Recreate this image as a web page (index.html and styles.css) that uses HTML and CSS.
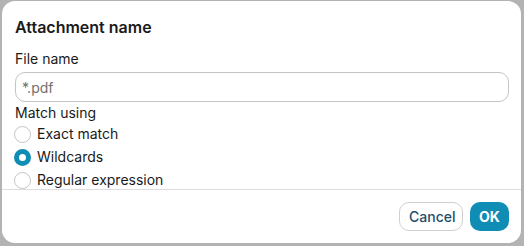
FILE: index.html
```html
<!DOCTYPE html>
<html>
<head>
<meta charset="utf-8">
<link rel="stylesheet" href="styles.css">
</head>
<body>
<div class="dialog">
  <div class="body">
    <h1 class="title">Attachment name</h1>
    <label class="label" for="fn">File name</label>
    <input id="fn" class="input" type="text" placeholder="*.pdf">
    <div class="label match">Match using</div>
    <div class="radios">
      <label class="radio"><span class="dot"></span>Exact match</label>
      <label class="radio"><span class="dot on"></span>Wildcards</label>
      <label class="radio"><span class="dot"></span>Regular expression</label>
    </div>
  </div>
  <div class="footer">
    <button class="btn cancel">Cancel</button>
    <button class="btn ok">OK</button>
  </div>
</div>
</body>
</html>
```
FILE: styles.css
```css
html, body {
  margin: 0;
  padding: 0;
  background: #b3b3b3;
  width: 524px;
  height: 246px;
  overflow: hidden;
}
body {
  padding: 1px 2px 0 2px;
  box-sizing: border-box;
  font-family: Inter, "Noto Sans", sans-serif;
  color: #1a1a1a;
}
.dialog {
  width: 519px;
  height: 242px;
  background: #fff;
  border-radius: 13px;
  display: flex;
  flex-direction: column;
  overflow: hidden;
}
.body {
  padding: 16px 12px 0 13px;
  display: flex;
  flex-direction: column;
  height: 189px;
  flex-shrink: 0;
  box-sizing: border-box;
  border-bottom: 1px solid #dedede;
  overflow: hidden;
}
.body > * { flex-shrink: 0; }
.title {
  margin: 0;
  font-size: 16px;
  font-weight: 600;
  line-height: 20px;
}
.label {
  font-size: 14px;
  line-height: 18px;
  margin-top: 13px;
}
.input {
  margin-top: 4px;
  height: 30px;
  box-sizing: border-box;
  border: 1px solid #c4c4c4;
  border-radius: 10px;
  padding: 0 6px;
  font-family: inherit;
  font-size: 14px;
  color: #1a1a1a;
  outline: none;
}
.input::placeholder { color: #6e6e6e; }
.match { margin-top: 2px; }
.radios {
  display: flex;
  flex-direction: column;
  gap: 5px;
  margin-top: 3px;
  margin-left: -1px;
}
.radio {
  display: flex;
  align-items: center;
  gap: 6px;
  font-size: 14px;
  line-height: 18px;
}
.dot {
  width: 17px;
  height: 17px;
  border: 1px solid #c4c4c4;
  border-radius: 50%;
  box-sizing: border-box;
  background: #fff;
}
.dot.on {
  border: 5.5px solid #0f8db5;
  background: #fff;
}
.footer {
  flex: 1;
  display: flex;
  justify-content: flex-end;
  align-items: flex-start;
  gap: 7px;
  padding: 12px 12px 0 0;
}
.btn {
  height: 29px;
  border-radius: 10px;
  font-family: inherit;
  font-size: 14px;
  padding: 0 9px;
  cursor: pointer;
}
.cancel {
  background: #fff;
  border: 1px solid #cfcfcf;
  color: #1f4e6a;
  font-weight: 500;
  width: 64px;
}
.ok {
  background: #0f8db5;
  border: none;
  color: #fff;
  font-weight: 700;
  width: 39px;
}
```
